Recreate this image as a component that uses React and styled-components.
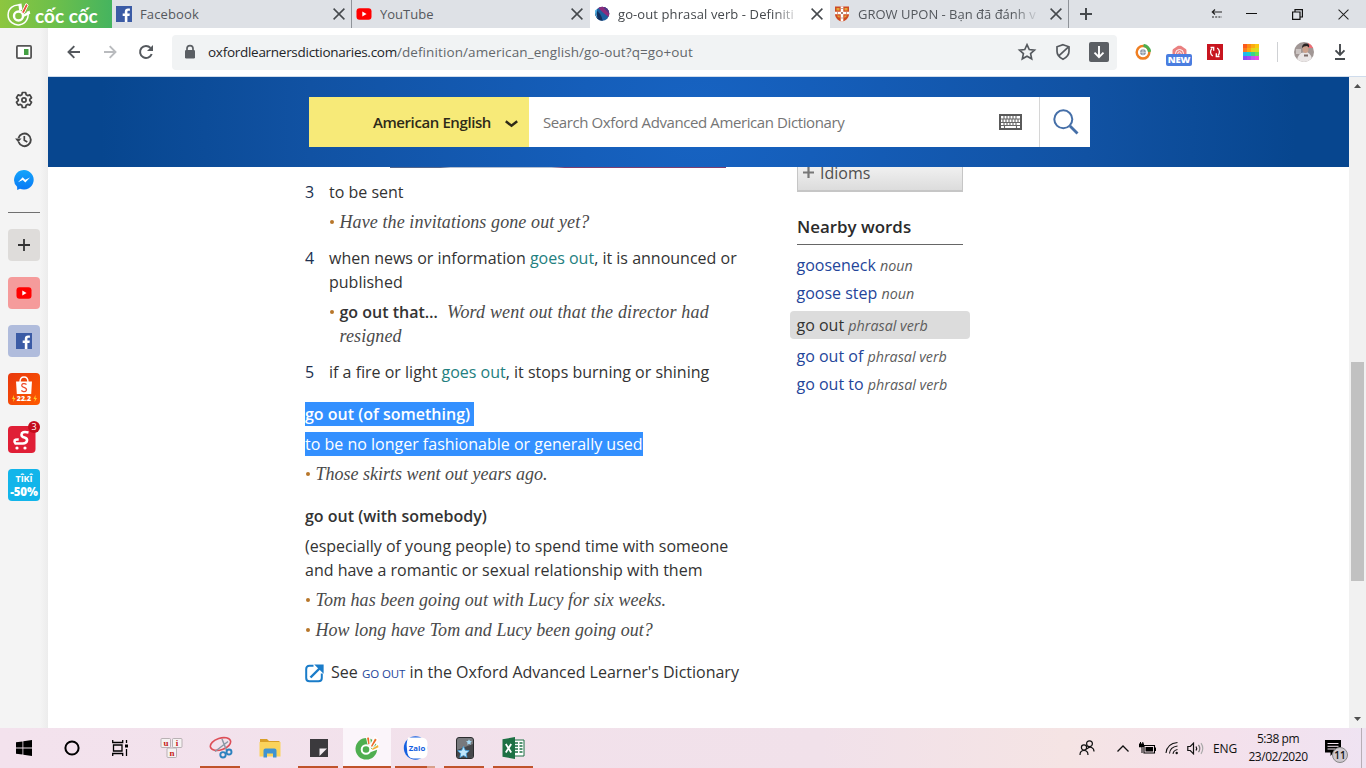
import React from "react";
import styled, { createGlobalStyle, css } from "styled-components";

const Global = createGlobalStyle`
  * { box-sizing: border-box; }
  body { margin: 0; background: #fff; font-family: "Open Sans", "Noto Sans", sans-serif; overflow: hidden; }
  svg { display: block; flex: none; }
`;

const Screen = styled.div`
  width: 1366px;
  height: 768px;
  display: flex;
  flex-direction: column;
  overflow: hidden;
`;

/* ---------- tab strip ---------- */
const TabStrip = styled.header`
  height: 28px;
  flex: none;
  display: flex;
  background: #dee1e6;
`;
const Brand = styled.div`
  width: 112px;
  padding-left: 7px;
  display: flex;
  align-items: center;
  gap: 4px;
  background: linear-gradient(90deg, #8dc63f, #6cbf4b 50%, #45b45f);
`;
const BrandName = styled.span`
  padding-top: 4px;
  color: #fff;
  font: 700 19px/24px Lato, sans-serif;
  white-space: nowrap;
`;
const Tab = styled.div`
  width: ${(p) => p.$w || 239}px;
  padding: 0 6px 0 4px;
  display: flex;
  align-items: center;
  gap: 8px;
  background: ${(p) => (p.$active ? "#fff" : "transparent")};
  border-right: 1px solid ${(p) => (p.$line ? "#8f9399" : p.$active ? "#fff" : "transparent")};
`;
const TabTitle = styled.span`
  flex: 1;
  min-width: 0;
  overflow: hidden;
  white-space: nowrap;
  color: ${(p) => (p.$active ? "#45494d" : "#54585d")};
  font-size: 13px;
  line-height: 28px;
  letter-spacing: ${(p) => p.$ls || 0}px;
  ${(p) => p.$fade && css`mask-image: linear-gradient(90deg, #000 84%, transparent 99%);`}
`;
const WindowButtons = styled.div`
  margin-left: auto;
  display: flex;
`;
const WindowButton = styled.div`
  width: ${(p) => p.$w || 46}px;
  display: flex;
  align-items: center;
  justify-content: center;
`;
const NewTab = styled.div`
  display: flex;
  align-items: center;
  padding-left: 11px;
`;

/* ---------- body ---------- */
const Body = styled.div`
  height: 700px;
  flex: none;
  display: flex;
`;
const Rail = styled.nav`
  width: 48px;
  flex: none;
  display: flex;
  flex-direction: column;
  align-items: center;
  background: linear-gradient(90deg, #f4f4f4 40px, #ececec);
`;
const RailIcon = styled.div`
  height: ${(p) => p.$h || 40}px;
  display: flex;
  align-items: center;
`;
const RailRule = styled.div`
  width: 32px;
  height: 1px;
  margin: 8px 0 0;
  background: #707070;
`;
const Tile = styled.div`
  position: relative;
  width: 32px;
  height: 32px;
  margin-top: 16px;
  border-radius: 4px;
  display: flex;
  flex-direction: column;
  align-items: center;
  justify-content: center;
  background: ${(p) => p.$bg || "transparent"};
  color: #fff;
`;
const CountBadge = styled.span`
  position: absolute;
  left: 20px;
  top: 0;
  width: 12px;
  height: 12px;
  border-radius: 50%;
  background: #c40d1c;
  color: #fff;
  text-align: center;
  font: 9px/12px "Open Sans", sans-serif;
`;
const TikiName = styled.span`
  font: 700 9px/13px "Open Sans", sans-serif;
`;
const TikiSale = styled.span`
  font: 800 11.5px/13px "Open Sans", sans-serif;
  letter-spacing: -0.1px;
`;
const ShopeeDate = styled.span`
  position: absolute;
  left: 0;
  width: 32px;
  bottom: 2px;
  text-align: center;
  font: 800 7px/8px "Open Sans", sans-serif;
`;

const Main = styled.div`
  flex: 1;
  display: flex;
  flex-direction: column;
`;
const Toolbar = styled.div`
  height: 49px;
  flex: none;
  display: flex;
  align-items: center;
  padding: 0 16px 0 16px;
  border-bottom: 1px solid #cfdcec;
`;
const NavButtons = styled.div`
  display: flex;
  gap: 16px;
  width: 108px;
`;
const Omnibox = styled.div`
  width: 945px;
  height: 35px;
  border-radius: 4px;
  background: #f1f3f4;
  display: flex;
  align-items: center;
  padding: 0 8px 0 11px;
`;
const Url = styled.span`
  margin-left: 11px;
  flex: 1;
  font-size: 13.5px;
  white-space: nowrap;
  color: #63676b;
  letter-spacing: 0.1px;
  b { font-weight: 400; color: #222427; letter-spacing: -0.28px; }
`;
const OmniActions = styled.div`
  display: flex;
  gap: 16px;
  align-items: center;
`;
const Extensions = styled.div`
  display: flex;
  align-items: center;
  flex: 1;
  padding-left: 16px;
`;
const Ext = styled.div`
  width: 36px;
  display: flex;
  justify-content: center;
  margin-left: ${(p) => p.$ml || 0}px;
`;
const ExtWrap = styled.div`
  position: relative;
  width: 26px;
  height: 26px;
  padding-top: 6px;
  display: flex;
  justify-content: center;
`;
const NewBadge = styled.span`
  position: absolute;
  left: 0;
  top: 15px;
  width: 26px;
  height: 12px;
  border-radius: 2px;
  background: #4a7de0;
  color: #fff;
  text-align: center;
  font: 800 9.5px/12px "Open Sans", sans-serif;
  letter-spacing: -0.2px;
`;
const Divider = styled.div`
  width: 1px;
  height: 20px;
  margin-left: 8px;
  background: #cfd1d4;
`;

/* ---------- page ---------- */
const Viewport = styled.div`
  height: 651px;
  display: flex;
`;
const Page = styled.main`
  width: 1301px;
  background: #fff;
`;
const Hero = styled.div`
  height: 90px;
  padding: 20px 0 0 261px;
  background: radial-gradient(circle 650px at 50% 50%, #1763c2 0, #155eba 18%, #1152a3 60%, #07468f 92%);
`;
const SearchBar = styled.div`
  width: 781px;
  height: 50px;
  display: flex;
  background: #fff;
`;
const DictPicker = styled.div`
  width: 220px;
  padding: 0 11px 0 0;
  display: flex;
  align-items: center;
  justify-content: flex-end;
  gap: 14px;
  background: #f7ea78;
  color: #2e2a18;
  font-size: 15px;
  font-weight: 600;
  span { letter-spacing: -0.4px; }
  svg { margin-top: 4px; }
`;
const Placeholder = styled.div`
  width: 511px;
  padding: 0 17px 0 14px;
  display: flex;
  align-items: center;
  justify-content: space-between;
  color: #757575;
  font-size: 15px;
  border-right: 1px solid #d6d6d6;
  span { letter-spacing: -0.4px; }
`;
const SearchButton = styled.div`
  flex: 1;
  display: flex;
  align-items: center;
  justify-content: center;
  padding-left: 2px;
`;
const Columns = styled.div`
  display: flex;
  padding-left: 257px;
`;
const Entry = styled.article`
  width: 485px;
  color: #333;
  font-size: 16px;
  line-height: 24px;
`;
const PictureEdge = styled.div`
  width: 336px;
  height: 1px;
  margin: 0 0 12px 85px;
  background: linear-gradient(90deg, #55678c 0 15%, #b5bfd0 18% 48%, #7d3f70 52%);
`;
const Sense = styled.section`
  display: flex;
  margin-bottom: 12px;
`;
const SenseNo = styled.span`
  width: 24px;
  color: #20304f;
`;
const SenseBody = styled.div`
  flex: 1;
`;
const Line = styled.div`
  white-space: nowrap;
  letter-spacing: ${(p) => p.$ls || 0}px;
`;
const Ref = styled.span`
  color: #238080;
`;
const Example = styled.div`
  margin-top: 6px;
  padding-left: 10.5px;
  position: relative;
  height: ${(p) => (p.$lines || 1) * 24}px;
  font-family: "Liberation Serif", serif;
  font-style: italic;
  font-size: 18px;
  color: #4a4a4a;
  &::before {
    content: "";
    position: absolute;
    left: 1px;
    top: 10px;
    width: 4px;
    height: 4px;
    border-radius: 50%;
    background: #b8762a;
  }
  b { font: 600 16px/24px "Open Sans", sans-serif; color: #333; letter-spacing: 0; margin-right: 9px; }
`;
const Phrase = styled.h2`
  margin: 18px 0 6px;
  font-size: 16px;
  line-height: 24px;
  font-weight: 600;
  color: #333;
  white-space: nowrap;
`;
const Selected = styled.span`
  display: inline-block;
  height: 24px;
  vertical-align: top;
  background: #3390ff;
  color: #fff;
  padding-right: ${(p) => p.$pr || 0}px;
`;
const SeeAlso = styled.div`
  margin-top: 18px;
  display: flex;
  align-items: center;
  gap: 7px;
  white-space: nowrap;
`;
const CapLink = styled.span`
  color: #24459a;
  font-size: 11.5px;
  font-weight: 500;
  letter-spacing: -0.1px;
`;

const Aside = styled.aside`
  width: 180px;
  font-size: 16px;
`;
const IdiomsBox = styled.div`
  width: 166px;
  height: 25px;
  margin-left: 7px;
  padding: 0 5px 12px;
  display: flex;
  align-items: center;
  gap: 6px;
  border: 1px solid #c6c6c6;
  border-top: 0;
  border-bottom-width: 2px;
  background: linear-gradient(#f0f0f0, #dcdcdc);
  color: #4f4f4f;
`;
const NearbyTitle = styled.h3`
  width: 166px;
  height: 29px;
  margin: 24px 0 6px 7px;
  border-bottom: 1px solid #666;
  font-size: 16.9px;
  line-height: 22px;
  font-weight: 600;
  color: #2b2b2b;
`;
const Nearby = styled.div`
  height: 28px;
  line-height: 28px;
  padding-left: 6.5px;
  margin: ${(p) => (p.$current ? "4px 0 3px" : "0")};
  border-radius: 4px;
  background: ${(p) => (p.$current ? "#dcdcdc" : "transparent")};
  color: ${(p) => (p.$current ? "#333" : "#24459a")};
  white-space: nowrap;
  i { color: #5c5c5c; font-size: 14.3px; }
`;
const Scrollbar = styled.div`
  width: 17px;
  display: flex;
  flex-direction: column;
  align-items: center;
  padding: 7px 0;
  background: #f1f1f1;
`;
const Thumb = styled.div`
  width: 13px;
  height: 219px;
  margin: 274px 0 auto;
  background: #c1c1c1;
`;

/* ---------- taskbar ---------- */
const Taskbar = styled.footer`
  height: 40px;
  flex: none;
  display: flex;
  background: linear-gradient(90deg, #f3e2ed, #f1e1ea 60%, #f5e4e4 78%, #f4e1ec 90%, #efe3f2);
`;
const Task = styled.div`
  width: ${(p) => p.$w || 49}px;
  height: 40px;
  display: flex;
  align-items: center;
  justify-content: center;
  position: relative;
  background: ${(p) => (p.$active ? "#fbf5fa" : "transparent")};
  &::after {
    content: "";
    display: ${(p) => (p.$open || p.$active ? "block" : "none")};
    position: absolute;
    bottom: 0;
    left: ${(p) => (p.$active ? 0 : 4)}px;
    right: ${(p) => (p.$active ? 0 : 5)}px;
    height: 2px;
    background: ${(p) => (p.$split ? "linear-gradient(90deg,#c0532b 80%,#d9a08a 80%)" : "#c0532b")};
  }
`;
const TaskGap = styled.div`
  width: 3px;
`;
const Tray = styled.div`
  margin-left: auto;
  display: flex;
  align-items: center;
  color: #111;
  font-size: 12px;
`;
const Cell = styled.div`
  width: ${(p) => p.$w}px;
  margin-right: ${(p) => p.$mr || 0}px;
  display: flex;
  justify-content: center;
  letter-spacing: -0.2px;
`;
const Clock = styled.div`
  width: 70px;
  text-align: center;
  font-size: 12px;
  line-height: 18px;
  letter-spacing: -0.45px;
  white-space: nowrap;
`;
const Notice = styled.div`
  position: relative;
  width: 40px;
  display: flex;
  justify-content: center;
`;
const NoticeCount = styled.span`
  position: absolute;
  left: 19px;
  top: 7px;
  width: 16px;
  height: 16px;
  border-radius: 50%;
  border: 1px solid #888;
  background: #cfc8cf;
  color: #111;
  text-align: center;
  font: 600 10px/14px "Open Sans", sans-serif;
`;
const ShowDesktop = styled.div`
  width: 5px;
  height: 40px;
  margin-left: 8px;
  border-left: 1px solid #b8aeb6;
`;

/* ---------- drawings ---------- */
const CloseX = ({ c = "#45494d", s = 12, w = 1.5 }) => (
  <svg width={s} height={s} viewBox="0 0 12 12" stroke={c} strokeWidth={w}><path d="M.6.6 11.4 11.4M11.4.6.6 11.4" /></svg>
);
const FacebookMark = () => (
  <svg width="16" height="16" viewBox="0 0 16 16"><rect width="16" height="16" fill="#3b5ba5" /><path d="M8.8 16V10H6.7V7.6h2.1V5.7c0-2.2 1.3-3.3 3.2-3.3h1.9v2.3h-1.3c-1 0-1.2.5-1.2 1.2v1.7h2.4l-.3 2.4h-2.1v6z" fill="#fff" /></svg>
);
const YouTubeMark = () => (
  <svg width="16" height="16" viewBox="0 0 16 16"><rect x=".5" y="2.3" width="15" height="11.4" rx="3" fill="#f00" /><path d="M6.3 5.5v5L10.6 8z" fill="#fff" /></svg>
);
const OxfordMark = () => (
  <svg width="16" height="16" viewBox="0 0 16 16"><defs><clipPath id="ox"><circle cx="8.300" cy="7.800" r="7" /></clipPath></defs><g clipPath="url(#ox)"><rect width="16" height="16" fill="#1a5fa0" /><path d="M3 0h13v12Q10 8 3 1z" fill="#8a2c7c" /><path d="M9 0h7v8Q12 6 9 0z" fill="#4b3a86" /><path d="M0 4q7 1 9 12H4Q0 10 0 4z" fill="#12305f" /></g><path d="M1 4.500Q.5 8 3.500 12.500 2 8 3 3z" fill="#58b7e8" /></svg>
);
const CrestMark = () => (
  <svg width="16" height="16" viewBox="0 0 16 16"><path d="M1 .5h14V9q-1 5-7 6.800Q2 14 1 9z" fill="#cf4a22" /><path d="M2.500 2h3v2.500h-3zM10.500 2h3v2.500h-3zM3 9.500h2.700v2.300Q3.500 11.500 3 9.500zM10.300 9.500h2.700q-.7 2-2.700 2.300z" fill="#e3a63a" /><path d="M6.700.5h2.600v5.200H15v2.600H9.300v7L8 15.800l-1.300-.5v-7H1V5.700h5.700z" fill="#fff" /><path d="M7.300 6h1.400v2H7.300zM7.500 2h1v1h-1zM7.500 11.500h1v1h-1zM3 6.500h1v1H3zM12 6.500h1v1h-1z" fill="#8b4a3a" /></svg>
);
const CocOutline = () => (
  <svg width="24" height="24" viewBox="0 0 24 24" fill="none">
    <path d="M20.500 9.500a10 10 0 1 1-8-6.500" stroke="#fff" strokeWidth="1.500" />
    <circle cx="11.500" cy="14" r="4.500" stroke="#fff" strokeWidth="2.400" />
    <path d="M12.300 9.500 11.300 2l3.200-.5.8 6z" fill="#fff" />
    <path d="M14.500 10.500 19 1.500l2.200 1.500-4.200 8.500z" fill="#e8503c" stroke="#fff" strokeWidth=".9" />
    <path d="M16 13 22.500 8.500l.8 3.300-6.300 3z" fill="#fff" />
  </svg>
);
const CocSolid = () => (
  <svg width="24" height="24" viewBox="0 0 24 24" fill="none">
    <circle cx="11.300" cy="12.800" r="10.800" fill="#4fae50" />
    <circle cx="11" cy="13.500" r="4.300" stroke="#fff" strokeWidth="2" />
    <circle cx="11" cy="13.500" r="2.500" fill="#4fae50" />
    <path d="M13 10.500 10.800 1l4.400-.5.8 8.500z" fill="#fff" />
    <path d="M14 10.500 19.500 0l4 3.500-6 9z" fill="#fff" />
    <path d="M15 14 24 6.500V13l-8 3z" fill="#fff" />
    <path d="M13.300 8.500 12 1.700l2-.2.500 6.500zM16 10 20 2.500l1.700 1.300L17 11z" fill="#ec6b2c" />
    <path d="M17 12.800 23 9l.5 2.200-6 2.800z" fill="#f0b23a" />
  </svg>
);
const Gear = () => (
  <svg width="18" height="18" viewBox="0 0 24 24" fill="none" stroke="#454545" strokeWidth="2.300" strokeLinejoin="round"><path d="M9.800 2h4.400l.7 3 1.900 1.100 3-.9 2.200 3.800-2.300 2.100v1.800l2.300 2.100-2.200 3.800-3-.9-1.900 1.100-.7 3H9.800l-.7-3-1.900-1.100-3 .9L2 15l2.300-2.100v-1.800L2 9l2.200-3.800 3 .9L9.100 5z" /><circle cx="12" cy="12" r="2.800" /></svg>
);
const History = () => (
  <svg width="18" height="18" viewBox="0 0 18 18" fill="none" stroke="#454545" strokeWidth="1.900"><path d="M3.600 11A6.300 6.300 0 1 0 3.500 7" /><path d="M0 7.500h6.500L3.200 11.200z" fill="#454545" stroke="none" /><path d="M9.300 5v4.200l3 1.700" strokeWidth="1.700" /></svg>
);
const Messenger = () => (
  <svg width="20" height="20" viewBox="0 0 20 20"><defs><linearGradient id="ms" x2="0" y2="1"><stop stopColor="#14a5fb" /><stop offset="1" stopColor="#0a78f5" /></linearGradient></defs><path d="M10 0a9.800 9.800 0 1 1-4 18.800L3.200 20l-.1-3.200A9.800 9.800 0 0 1 10 0z" fill="url(#ms)" /><path d="m4 12.300 4.700-5 2.500 2.500L16 7.400l-4.700 5-2.500-2.500z" fill="#fff" /></svg>
);
const Arrow = ({ c, flip }) => (
  <svg width="20" height="20" viewBox="0 0 20 20" fill="none" stroke={c} strokeWidth="1.900" transform={flip ? "scale(-1 1)" : undefined}><path d="M16 10H5M10.300 4.200 4.500 10l5.800 5.800" /></svg>
);
const Reload = () => (
  <svg width="20" height="20" viewBox="0 0 20 20" fill="none" stroke="#55595e" strokeWidth="2"><path d="M15.700 12a6 6 0 1 1-1.200-6.100" /><path d="M17 3v6h-6z" fill="#55595e" stroke="none" /></svg>
);
const Lock = () => (
  <svg width="14" height="16" viewBox="0 0 14 16"><path d="M4 7V4.600a3 3 0 0 1 6 0V7" fill="none" stroke="#5b5f64" strokeWidth="1.700" /><rect x="2" y="6" width="10" height="8.500" rx="1.200" fill="#5b5f64" /></svg>
);
const Star = () => (
  <svg width="20" height="20" viewBox="0 0 24 24" fill="none" stroke="#55595e" strokeWidth="2"><path d="m12 3.200 2.700 5.800 6.300.7-4.700 4.300 1.300 6.200L12 17l-5.600 3.200L7.700 14 3 9.700 9.300 9z" /></svg>
);
const Shield = () => (
  <svg width="20" height="20" viewBox="0 0 20 20" fill="none" stroke="#55595e" strokeWidth="1.700"><path d="M10 2.700 16 4.800v4.400c0 3.700-2.300 6.200-6 8-3.700-1.800-6-4.300-6-8V4.800zM5.500 14.200 15 5.300" /></svg>
);
const Download = ({ c, bar }) => (
  <svg width="20" height="20" viewBox="0 0 20 20" fill="none" stroke={c} strokeWidth="1.900"><path d={bar ? "M10 2v10.500M5.500 8.300l4.500 4.500 4.500-4.500M5 17h10" : "M10 4v11M5.500 10.700l4.500 4.500 4.500-4.500"} /></svg>
);
const DownloadTile = styled.div`
  width: 20px;
  height: 20px;
  border-radius: 2px;
  background: #5b5f64;
`;
const RingExt = () => (
  <svg width="16" height="16" viewBox="0 0 16 16" fill="none"><circle cx="8" cy="8.300" r="6.300" stroke="#ef7f23" strokeWidth="2.500" /><path d="M8.500 1.500a6.800 6.800 0 0 1 6 6.300" stroke="#4caf50" strokeWidth="3.200" /><circle cx="8" cy="8.300" r="3.700" fill="#8b97a5" stroke="#fff" strokeWidth="1.500" /><path d="M8 5.300v6M5 8.300h6" stroke="#dfe4ea" strokeWidth=".8" /></svg>
);
const CameraExt = () => (
  <svg width="15" height="16" viewBox="0 0 15 16"><path d="M.5 15V5.500Q.5 4 2 3.500L6 .8h3l4 2.700q1.500.5 1.500 2V15z" fill="#ea8080" /><circle cx="7.500" cy="8.500" r="4" fill="none" stroke="#fff" strokeWidth="1" /><circle cx="7.500" cy="8.500" r="1.700" fill="none" stroke="#fff" strokeWidth=".9" /></svg>
);
const SyncExt = () => (
  <svg width="16" height="16" viewBox="0 0 16 16" fill="none" stroke="#fff" strokeWidth="1.300"><rect width="16" height="16" fill="#c8151f" stroke="none" /><path d="M5.800 12A4.800 4.800 0 0 1 5 4.500M10.200 4A4.800 4.800 0 0 1 11 11.500" /><path d="M3.500 3.500h3.200v3.200M12.500 12.500H9.300V9.300" /></svg>
);
const PaletteExt = () => (
  <svg width="16" height="16" viewBox="0 0 16 16">
    {[["#fb5a1c", "#fc8a14", "#fcab10", "#fbc810"], ["#fb7a22", "#fba60f", "#e6d31a", "#d6de20"], ["#20b8f0", "#18cdd2", "#39d48a", "#6ae052"], ["#8a4cf5", "#a34cf2", "#c455ef", "#ea4be2"]].map((r, y) => r.map((c, x) => <rect key={`${x}${y}`} x={x * 4} y={y * 4} width="4.050" height="4.050" fill={c} />))}
  </svg>
);
const Avatar = () => (
  <svg width="20" height="20" viewBox="0 0 20 20"><defs><clipPath id="av"><circle cx="10" cy="10" r="10" /></clipPath></defs><g clipPath="url(#av)"><rect width="20" height="20" fill="#a19795" /><rect x="14" width="6" height="6" fill="#f26d74" /><path d="M3 20q0-6 4-9l6-1q5 2 5 10z" fill="#e9e5e5" /><path d="M2 7h5v5H2z" fill="#cbc4c2" /><ellipse cx="11.500" cy="7" rx="3" ry="4" fill="#cba18c" /><path d="M8 6q0-4.500 4-4.500T15 5.500l-2-1.500-3 .5z" fill="#2b2424" /><path d="M10 12.500h4v2h-4z" fill="#7b6b68" /></g></svg>
);
const Keyboard = () => (
  <svg width="23" height="16" viewBox="0 0 23 16"><rect x="1" y="1" width="21" height="14" fill="#fff" stroke="#5a5a5a" strokeWidth="2" /><path d="M2 5h19M2 8.500h19M2 11.500h19M5 2v3M8 2v3M11 2v3M14 2v3M17 2v3M4 5v3.500M7 5v3.500M10 5v3.500M13 5v3.500M16 5v3.500M19 5v3.500M5 8.500v3M8 8.500v3M11 8.500v3M14 8.500v3M17 8.500v3M5.500 12v2M17.500 12v2" stroke="#666" strokeWidth="1.100" /></svg>
);
const Magnifier = () => (
  <svg width="26" height="26" viewBox="0 0 26 26" fill="none" stroke="#456fa8"><circle cx="10.300" cy="10.300" r="9" strokeWidth="2" /><path d="m17 17 7.500 7.500" strokeWidth="2.800" /></svg>
);
const ExternalLink = () => (
  <svg width="19" height="19" viewBox="0 0 19 19" fill="none" stroke="#1a7cc9" strokeWidth="2"><path d="M8.500 1.800H4.500Q1.200 1.800 1.200 5v9q0 3.300 3.300 3.300h9q3.300 0 3.300-3.300v-4.500" /><path d="M5.500 13.500 15 4" strokeWidth="2.400" /><path d="M9.200.4h9.400v9.400z" fill="#1a7cc9" stroke="none" /></svg>
);

const railIcons = [
  { h: 48, el: <svg width="16" height="14" viewBox="0 0 16 14"><rect x=".9" y=".9" width="14.200" height="12.200" rx="1" fill="#fff" stroke="#555" strokeWidth="1.800" /><rect x="8" y="4" width="4.500" height="6" fill="#44a043" /></svg> },
  { h: 48, el: <Gear /> },
  { h: 32, el: <History /> },
  { h: 48, el: <Messenger /> },
];
const nearby = [["gooseneck", "noun"], ["goose step", "noun"], ["go out", "phrasal verb", true], ["go out of", "phrasal verb"], ["go out to", "phrasal verb"]];

export default function App() {
  return (
    <Screen>
      <Global />
      <TabStrip>
        <Brand><CocOutline /><BrandName>cốc cốc</BrandName></Brand>
        <Tab $w={240} $line><FacebookMark /><TabTitle $ls={0.12}>Facebook</TabTitle><CloseX /></Tab>
        <Tab $w={238}><YouTubeMark /><TabTitle>YouTube</TabTitle><CloseX /></Tab>
        <Tab $w={240} $active><OxfordMark /><TabTitle $active $fade $ls={0.1}>go-out phrasal verb - Definiti</TabTitle><CloseX /></Tab>
        <Tab $line><CrestMark /><TabTitle $fade>GROW UPON - Bạn đã đánh v</TabTitle><CloseX /></Tab>
        <NewTab><svg width="12" height="12" viewBox="0 0 12 12" stroke="#45494d" strokeWidth="2"><path d="M6 0v12M0 6h12" /></svg></NewTab>
        <WindowButtons>
          <WindowButton $w={22}><svg width="12" height="10" viewBox="0 0 12 10" fill="none" stroke="#222" strokeWidth="1.200"><path d="M1 3h10M4 .5 1.300 3 4 5.500" /><path d="M1 8h10" strokeDasharray="2 1.200" /></svg></WindowButton>
          <WindowButton><svg width="11" height="2" viewBox="0 0 11 2"><path d="M0 .5h11" stroke="#111" /></svg></WindowButton>
          <WindowButton><svg width="11" height="11" viewBox="0 0 11 11" fill="none" stroke="#111" strokeWidth="1.200"><path d="M.6 3h7.400v7.400H.6zM3 3V.6h7.400V8H8" /></svg></WindowButton>
          <WindowButton><CloseX c="#222" s={11} w={1.100} /></WindowButton>
        </WindowButtons>
      </TabStrip>

      <Body>
        <Rail>
          {railIcons.map((r, i) => <RailIcon key={i} $h={r.h}>{r.el}</RailIcon>)}
          <RailRule />
          <Tile $bg="#dedcda"><svg width="12" height="12" viewBox="0 0 12 12" stroke="#333" strokeWidth="1.800"><path d="M6 0v12M0 6h12" /></svg></Tile>
          <Tile $bg="#f59b9b"><YouTubeMark /></Tile>
          <Tile $bg="#b0bcdc"><FacebookMark /></Tile>
          <Tile $bg="linear-gradient(135deg,#e8380d,#ff5a00)">
            <svg width="32" height="32" viewBox="0 0 32 32"><path d="M8 8.500h16l-.8 12.500H8.800z" fill="#fff" /><path d="M12 9q0-5 4-5t4 5" fill="none" stroke="#fff" strokeWidth="1.400" /><path d="M18.500 11.500q-1.500-1.300-3.300-.8-2 .8-1.200 2.400.6.9 2.600 1.600 2.300.9 1.800 2.500-.7 1.700-2.900 1.400-1.200-.2-2.200-1" fill="none" stroke="#ee4d2d" strokeWidth="1.300" /><path d="m6 22-2 4h1.500l-.5 3 2.500-4H6zM27.500 22l-2 4H27l-.5 3 2.500-4h-1.500z" fill="#ffc928" /></svg>
            <ShopeeDate>22.2</ShopeeDate>
          </Tile>
          <Tile>
            <svg width="32" height="32" viewBox="0 0 32 32"><rect y="5" width="27.500" height="27" rx="4" fill="#e01f36" /><path d="M20.500 11.500q-7-1.500-7 2.200 0 2 3 2.800 3 1 2.500 3.200-.7 2.800-4 2.800H7.500q-1.500-1.800-.8-3.200.7-1 4-.8" fill="none" stroke="#fff" strokeWidth="2.600" /><circle cx="9" cy="27" r="1.600" fill="#fff" /><circle cx="17" cy="27" r="1.600" fill="#fff" /></svg>
            <CountBadge>3</CountBadge>
          </Tile>
          <Tile $bg="#12b5ea"><TikiName>TÎKÎ</TikiName><TikiSale>-50%</TikiSale></Tile>
        </Rail>

        <Main>
          <Toolbar>
            <NavButtons><Arrow c="#55595e" /><Arrow c="#b9bbbe" flip /><Reload /></NavButtons>
            <Omnibox>
              <Lock />
              <Url><b>oxfordlearnersdictionaries.com</b>/definition/american_english/go-out?q=go+out</Url>
              <OmniActions><Star /><Shield /><DownloadTile><Download c="#fff" /></DownloadTile></OmniActions>
            </Omnibox>
            <Extensions>
              <Ext $ml={-8}><RingExt /></Ext>
              <Ext><ExtWrap><CameraExt /><NewBadge>NEW</NewBadge></ExtWrap></Ext>
              <Ext><SyncExt /></Ext>
              <Ext><PaletteExt /></Ext>
              <Divider />
              <Ext $ml={8}><Avatar /></Ext>
              <Ext><Download c="#45494d" bar /></Ext>
            </Extensions>
          </Toolbar>

          <Viewport>
            <Page>
              <Hero>
                <SearchBar>
                  <DictPicker><span>American English</span><svg width="13" height="8" viewBox="0 0 13 8" fill="none" stroke="#2e2a18" strokeWidth="2.400"><path d="m.8 1.200 5.700 4.600 5.700-4.600" /></svg></DictPicker>
                  <Placeholder><span>Search Oxford Advanced American Dictionary</span><Keyboard /></Placeholder>
                  <SearchButton><Magnifier /></SearchButton>
                </SearchBar>
              </Hero>
              <Columns>
                <Entry>
                  <PictureEdge />
                  <Sense><SenseNo>3</SenseNo><SenseBody><Line>to be sent</Line><Example><Line $ls={0.1}>Have the invitations gone out yet?</Line></Example></SenseBody></Sense>
                  <Sense><SenseNo>4</SenseNo><SenseBody>
                    <Line>when news or information <Ref>goes out</Ref>, it is announced or</Line>
                    <Line>published</Line>
                    <Example $lines={2}><Line $ls={0.17}><b>go out that…</b>Word went out that the director had</Line><Line $ls={0.1}>resigned</Line></Example>
                  </SenseBody></Sense>
                  <Sense><SenseNo>5</SenseNo><SenseBody><Line>if a fire or light <Ref>goes out</Ref>, it stops burning or shining</Line></SenseBody></Sense>
                  <Phrase><Selected $pr={4}>go out (of something)</Selected></Phrase>
                  <Line><Selected>to be no longer fashionable or generally used</Selected></Line>
                  <Example><Line>Those skirts went out years ago.</Line></Example>
                  <Phrase>go out (with somebody)</Phrase>
                  <Line>(especially of young people) to spend time with someone</Line>
                  <Line>and have a romantic or sexual relationship with them</Line>
                  <Example><Line $ls={0.05}>Tom has been going out with Lucy for six weeks.</Line></Example>
                  <Example><Line $ls={0.05}>How long have Tom and Lucy been going out?</Line></Example>
                  <SeeAlso><ExternalLink /><span>See <CapLink>GO OUT</CapLink> in the Oxford Advanced Learner's Dictionary</span></SeeAlso>
                </Entry>
                <Aside>
                  <IdiomsBox><svg width="11" height="11" viewBox="0 0 11 11" stroke="#777" strokeWidth="2.200"><path d="M5.500 0v11M0 5.500h11" /></svg><span>Idioms</span></IdiomsBox>
                  <NearbyTitle>Nearby words</NearbyTitle>
                  {nearby.map(([w, pos, cur]) => <Nearby key={w} $current={cur}>{w} <i>{pos}</i></Nearby>)}
                </Aside>
              </Columns>
            </Page>
            <Scrollbar>
              <svg width="7" height="4" viewBox="0 0 7 4"><path d="M0 4 3.500 0 7 4z" fill="#505050" /></svg>
              <Thumb />
              <svg width="7" height="4" viewBox="0 0 7 4"><path d="M0 0h7L3.500 4z" fill="#505050" /></svg>
            </Scrollbar>
          </Viewport>
        </Main>
      </Body>

      <Taskbar>
        <Task $w={48}><svg width="16" height="16" viewBox="0 0 16 16"><path d="M0 2.300 6.500 1.400v6.200H0zM7.300 1.300 16 0v7.600H7.300zM0 8.400h6.500v6.200L0 13.700zM7.300 8.400H16V16l-8.700-1.300z" /></svg></Task>
        <Task $w={48}><svg width="16" height="16" viewBox="0 0 16 16"><circle cx="8" cy="8" r="6.600" fill="none" stroke="#000" strokeWidth="2" /></svg></Task>
        <Task $w={48}><svg width="17" height="16" viewBox="0 0 17 16" fill="none" stroke="#000" strokeWidth="1.300"><path d="M.7 0v2.500h10V0M.7 16v-2.500h10V16M1.500 5h8.500v6H1.500zM14.500 0v3M14.500 9v7" /><path d="M13 4.500h3v3h-3z" fill="#000" stroke="none" /></svg></Task>
        <TaskGap />
        <Task><svg width="24" height="20" viewBox="0 0 24 20" fontFamily="Liberation Serif, serif" fontWeight="700" fontSize="9" fill="#c62020" textAnchor="middle"><g fill="#f5f2f2" stroke="#a9a2a4" strokeWidth=".8"><rect x="1" y=".5" width="9.500" height="9" rx="1" /><rect x="12.500" y=".5" width="9.500" height="9" rx="1" /><rect x="7" y="10" width="9.500" height="9.500" rx="1" /></g><text x="6" y="7.500">u</text><text x="17" y="7.500">i</text><text x="12" y="17.500">n</text></svg></Task>
        <Task $open><svg width="24" height="24" viewBox="0 0 24 24" fill="none"><ellipse cx="11.500" cy="8" rx="10.500" ry="5.800" transform="rotate(-18 11.500 8)" stroke="#dd4f58" strokeWidth="1.600" /><path d="m6 15.500 13-10M13 3l5 12.500" stroke="#8c98a5" strokeWidth="1.500" /><circle cx="14" cy="18.800" r="2.700" stroke="#2d82bf" strokeWidth="1.900" /><circle cx="20" cy="16" r="2.500" stroke="#2d82bf" strokeWidth="1.900" /></svg></Task>
        <Task><svg width="22" height="20" viewBox="0 0 22 20"><path d="M1 1h7l2 2h10.500v4H1z" fill="#d99f27" /><path d="M.5 4H21.500v14.500H.5z" fill="#fbd35b" /><path d="M4.500 19.500v-7q0-2 2-2h9q2 0 2 2v7h-3.500v-4h-6v4z" fill="#3f93d2" /></svg></Task>
        <Task $open><svg width="18" height="18" viewBox="0 0 18 18"><path d="M0 0h18v18H0z" fill="#3b3a3d" /><path d="M9.500 17V9.500H17z" fill="#f4eef3" /></svg></Task>
        <Task $active $w={48}><CocSolid /></Task>
        <Task $open $split><svg width="25" height="24" viewBox="0 0 25 24"><circle cx="12.500" cy="12" r="11.700" fill="#1560e0" /><path d="M5 1.500h13q6.500 0 6.500 6v9q0 6-6.500 6h-8Q4 22 4 13 3 8 5 1.500z" fill="#fff" /><text x="14" y="14.500" fontFamily="Open Sans, sans-serif" fontSize="7.800" fontWeight="700" fill="#1560e0" textAnchor="middle">Zalo</text></svg></Task>
        <Task $open><svg width="18" height="22" viewBox="0 0 18 22"><rect x=".5" y=".5" width="17" height="21" rx="2.500" fill="#77797d" stroke="#2b2c2e" /><path d="M1 13 17 7v11.500q0 2.500-2.500 2.500h-11Q1 21 1 18.500z" fill="#45474b" /><path d="m7.500 9.500 1.700 3.800 4 .4-3 2.800.8 4-3.500-2-3.600 2 .8-4-3-2.800 4-.4z" fill="#bfe6fb" stroke="#3f9ddc" strokeWidth=".8" /><path d="m13 2.200.9 1.900 2 .2-1.500 1.400.4 2-1.800-1-1.800 1 .4-2-1.500-1.400 2-.2z" fill="#a8dcf8" /></svg></Task>
        <Task $open><svg width="23" height="22" viewBox="0 0 23 22"><path d="M11 3h11v16H11z" fill="#fff" stroke="#1d7044" /><path d="M13 6h3M17.500 6h3M13 9h3M17.500 9h3M13 12h3M17.500 12h3M13 15h3M17.500 15h3" stroke="#1d7044" strokeWidth="1.700" /><path d="M.5 2.200 13 0v22L.5 19.800z" fill="#1d7044" /><path d="m3.800 7 5.400 8.500M9.200 7l-5.400 8.500" stroke="#fff" strokeWidth="1.800" /></svg></Task>

        <Tray>
          <Cell $w={24} $mr={11}><svg width="16" height="16" viewBox="0 0 16 16" fill="none" stroke="#111" strokeWidth="1.200"><circle cx="5" cy="7.500" r="2.600" /><path d="M1 15q0-4.500 4-4.500T9 15" /><circle cx="10.500" cy="3.700" r="2.900" /><path d="M8 9q2-2.500 4.500-1.500Q15 8.500 15 11.500" /></svg></Cell>
          <Cell $w={25}><svg width="12" height="7" viewBox="0 0 12 7" fill="none" stroke="#111" strokeWidth="1.300"><path d="M.5 6.500 6 1l5.500 5.500" /></svg></Cell>
          <Cell $w={25}><svg width="17" height="12" viewBox="0 0 17 12"><path d="M5 3.500h10.500v7.500H5z" fill="none" stroke="#000" strokeWidth="1.100" /><path d="M6.500 5h7.500v4.500H6.500zM15.500 5.500H17v3.500h-1.500zM0 1.500h5V5H3.500v6h-1V5.200H0zM1 0h1v2H1zM3.300 0h1v2h-1z" /></svg></Cell>
          <Cell $w={24}><svg width="14" height="14" viewBox="0 0 14 14" fill="none" stroke="#111" strokeWidth="1.100"><path d="M1 12Q2 2.500 12.500 1.500M4.500 12.500Q5 6 12.500 5M8 12.800Q8.500 9.300 12.500 8.500" /><circle cx="11.700" cy="12" r="1.200" fill="#111" stroke="none" /></svg></Cell>
          <Cell $w={23}><svg width="17" height="13" viewBox="0 0 17 13" fill="none" stroke="#111" strokeWidth="1.200"><path d="M.8 4.500h2.500L6.500 1.200v10.600L3.300 8.500H.8z" /><path d="M9 4.500q1.300 2 0 4" /><path d="M11.500 2.800q2.500 3.700 0 7.400" stroke="#777" /><path d="M14 1.200q3.500 5.300 0 10.600" stroke="#aaa" /></svg></Cell>
          <Cell $w={36}>ENG</Cell>
          <Clock>5:38 pm<br />23/02/2020</Clock>
          <Notice><svg width="16" height="16" viewBox="0 0 16 16"><path d="M0 0h16v12.500H8.500L5.500 16v-3.500H0z" /><path d="M2.500 3.500h11M2.500 6.300h11M2.500 9h8" stroke="#f3e2ed" /></svg><NoticeCount>11</NoticeCount></Notice>
          <ShowDesktop />
        </Tray>
      </Taskbar>
    </Screen>
  );
}
